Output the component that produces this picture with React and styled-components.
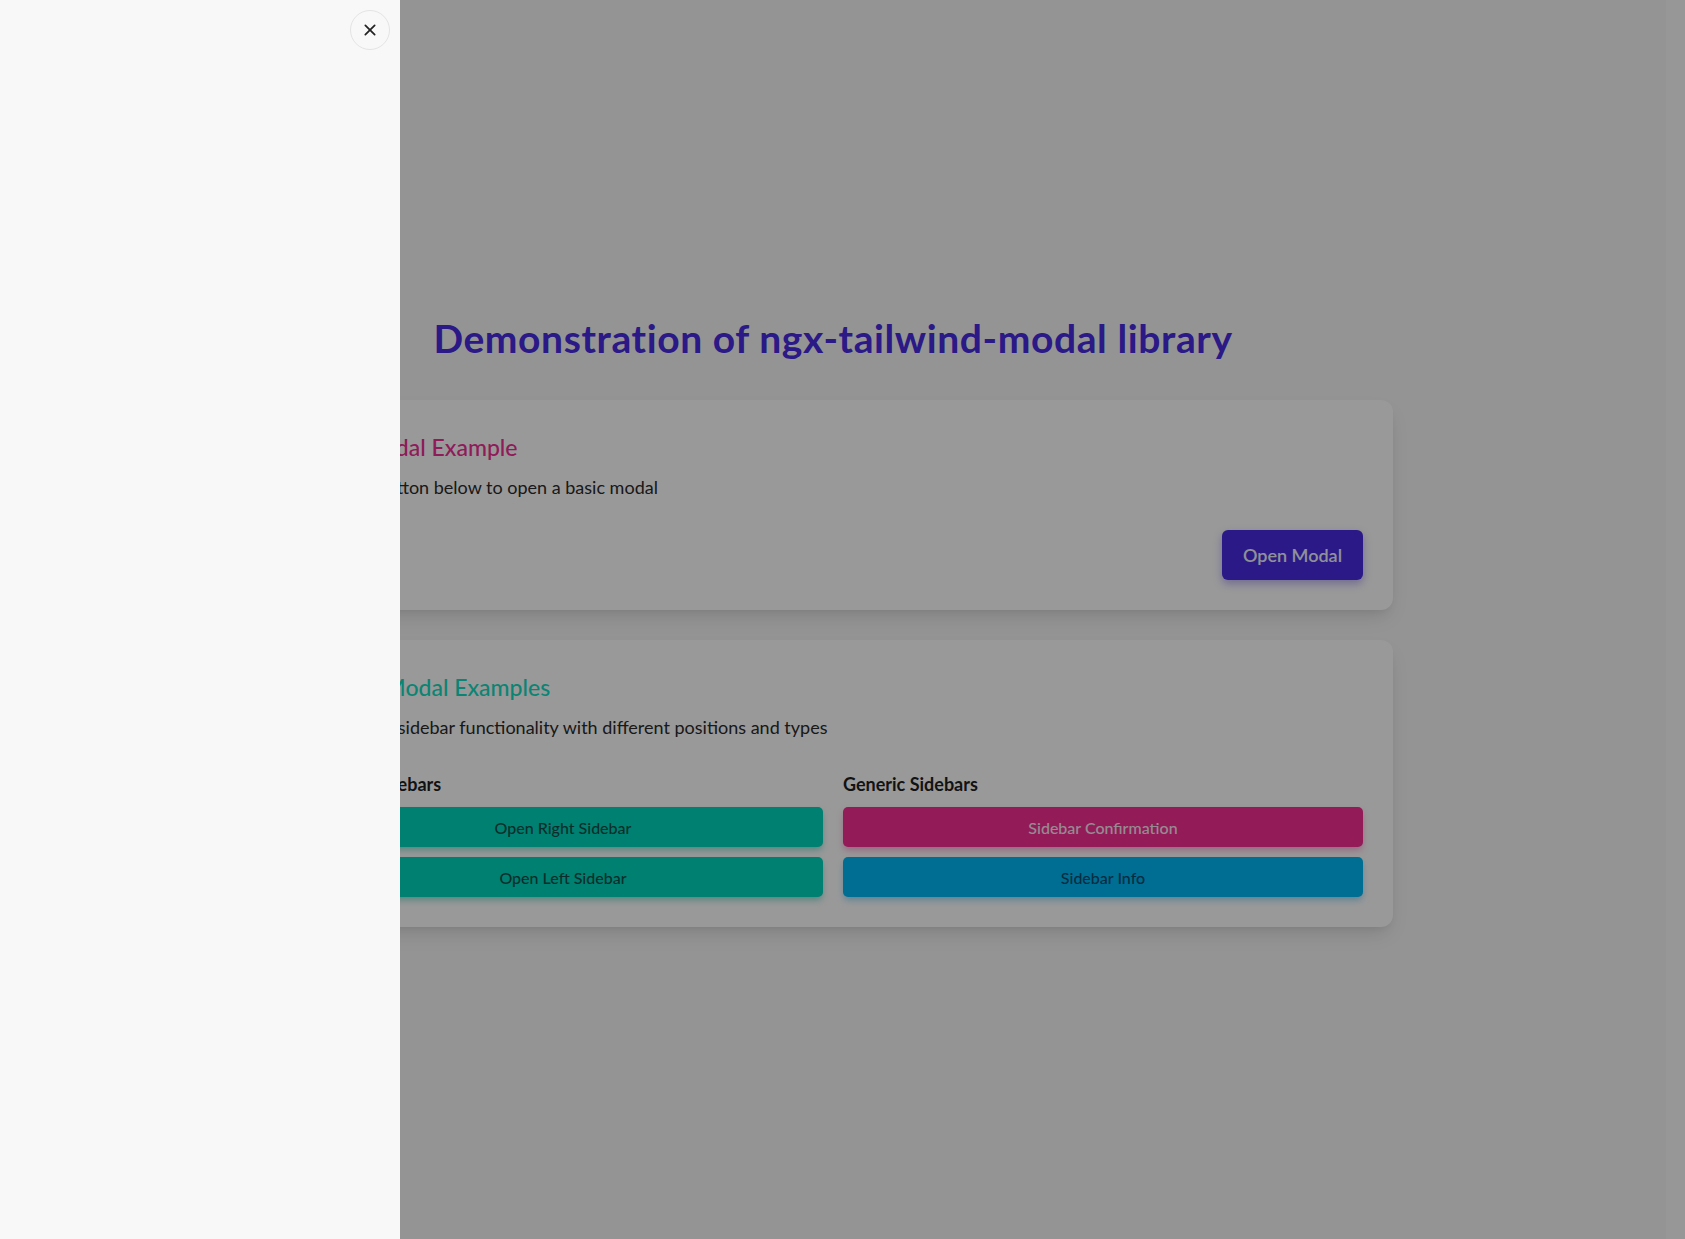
import React from "react";
import styled, { createGlobalStyle } from "styled-components";

const GlobalStyle = createGlobalStyle`
  * { box-sizing: border-box; }
  html, body { margin: 0; padding: 0; }
  body {
    font-family: Lato, "Noto Sans", "Liberation Sans", sans-serif;
    background: #f7f7f7;
    color: #2b2b2b;
  }
`;

const Shell = styled.div`
  display: flex;
  min-height: 100vh;
`;

const Page = styled.main`
  flex: 1;
  min-height: 100vh;
  display: flex;
  flex-direction: column;
  align-items: center;
  justify-content: center;
  padding: 6px 16px 0;
`;

const Gutter = styled.div`
  width: 19px;
  background: #fcfcfc;
`;

const Title = styled.h1`
  margin: 0 0 42px;
  font-size: 39px;
  line-height: 40px;
  letter-spacing: 0.6px;
  font-weight: 700;
  color: #462be0;
`;

const Card = styled.section`
  width: 1120px;
  background: #ffffff;
  border-radius: 12px;
  padding: 30px;
  box-shadow: 0 10px 20px -4px rgba(0, 0, 0, 0.12), 0 4px 8px -4px rgba(0, 0, 0, 0.08);
  & + & { margin-top: 30px; }
`;

const CardTitle = styled.h2`
  margin: 0;
  font-size: 23px;
  line-height: 34px;
  font-weight: 500;
  color: ${(p) => p.$color};
`;

const CardText = styled.p`
  margin: 9px 0 0;
  font-size: 18px;
  line-height: 28px;
  color: #2b2b2b;
`;

const Actions = styled.div`
  display: flex;
  justify-content: flex-end;
  margin-top: 29px;
`;

const PrimaryButton = styled.button`
  font-family: inherit;
  font-size: 18px;
  font-weight: 600;
  line-height: 26px;
  padding: 12px 21px;
  border: 0;
  border-radius: 6px;
  background: #462be0;
  color: #f0f0ff;
  box-shadow: 0 4px 8px rgba(70, 43, 224, 0.35);
  cursor: pointer;
`;

const Columns = styled.div`
  display: grid;
  grid-template-columns: 1fr 1fr;
  column-gap: 20px;
  margin-top: 30px;
`;

const Column = styled.div`
  display: flex;
  flex-direction: column;
  gap: 10px;
`;

const ColumnTitle = styled.h3`
  margin: 0;
  font-size: 18px;
  line-height: 26px;
  font-weight: 700;
  color: #1f1f1f;
`;

const SideButton = styled.button`
  height: 40px;
  width: 100%;
  font-family: inherit;
  font-size: 16px;
  font-weight: 500;
  border: 0;
  border-radius: 5px;
  background: ${(p) => p.$bg};
  color: ${(p) => p.$fg};
  box-shadow: 0 4px 7px -1px ${(p) => p.$shadow};
  cursor: pointer;
`;

const Backdrop = styled.div`
  position: fixed;
  inset: 0;
  background: rgba(0, 0, 0, 0.4);
`;

const Drawer = styled.aside`
  position: fixed;
  top: 0;
  bottom: 0;
  left: 0;
  width: 400px;
  background: #f8f8f8;
`;

const CloseButton = styled.button`
  position: absolute;
  top: 10px;
  right: 10px;
  width: 40px;
  height: 40px;
  border-radius: 50%;
  border: 1px solid #e4e4e4;
  background: #f8f8f8;
  display: flex;
  align-items: center;
  justify-content: center;
  padding: 0;
  cursor: pointer;
`;

const teal = { $bg: "#00d5bb", $fg: "#134e4a", $shadow: "rgba(0, 180, 160, 0.45)" };

export default function App() {
  return (
    <>
      <GlobalStyle />
      <Shell>
        <Page>
          <Title>Demonstration of ngx-tailwind-modal library</Title>

          <Card>
            <CardTitle $color="#f02e95">Basic Modal Example</CardTitle>
            <CardText>Click the button below to open a basic modal</CardText>
            <Actions>
              <PrimaryButton>Open Modal</PrimaryButton>
            </Actions>
          </Card>

          <Card>
            <CardTitle $color="#14dcc0">Sidebar Modal Examples</CardTitle>
            <CardText>Explore the sidebar functionality with different positions and types</CardText>
            <Columns>
              <Column>
                <ColumnTitle>Position Sidebars</ColumnTitle>
                <SideButton {...teal}>Open Right Sidebar</SideButton>
                <SideButton {...teal}>Open Left Sidebar</SideButton>
              </Column>
              <Column>
                <ColumnTitle>Generic Sidebars</ColumnTitle>
                <SideButton $bg="#f32e93" $fg="#fce7f3" $shadow="rgba(240, 46, 147, 0.4)">
                  Sidebar Confirmation
                </SideButton>
                <SideButton $bg="#00b8f5" $fg="#0c4a6e" $shadow="rgba(0, 160, 230, 0.4)">
                  Sidebar Info
                </SideButton>
              </Column>
            </Columns>
          </Card>
        </Page>
        <Gutter />
      </Shell>

      <Backdrop />
      <Drawer>
        <CloseButton aria-label="Close">
          <svg width="16" height="16" viewBox="0 0 24 24" fill="none" stroke="#222" strokeWidth="2.6" strokeLinecap="round">
            <path d="M5 5l14 14M19 5L5 19" />
          </svg>
        </CloseButton>
      </Drawer>
    </>
  );
}
